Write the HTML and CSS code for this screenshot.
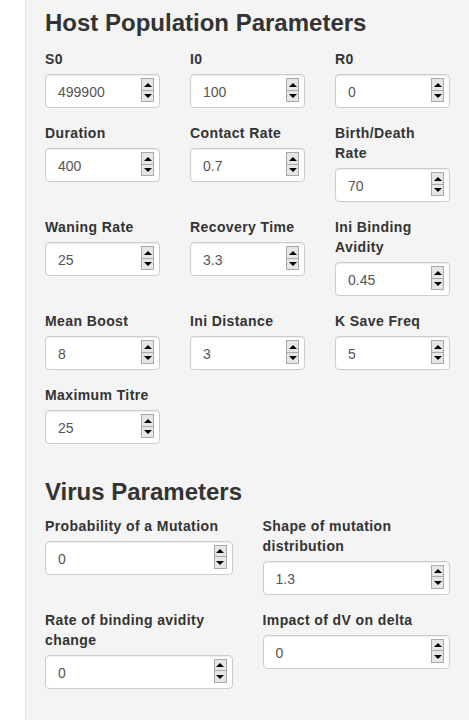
FILE: index.html
```html
<!DOCTYPE html>
<html>
<head>
<meta charset="utf-8">
<link rel="stylesheet" href="styles.css">
</head>
<body>
<div class="page">
  <div class="well">
    <h3 class="title first">Host Population Parameters</h3>
    <div class="grid three">
      <div class="group"><label>S0</label><div class="num"><input value="499900"><span class="spin"><i class="up"></i><i class="down"></i></span></div></div>
      <div class="group"><label>I0</label><div class="num"><input value="100"><span class="spin"><i class="up"></i><i class="down"></i></span></div></div>
      <div class="group"><label>R0</label><div class="num"><input value="0"><span class="spin"><i class="up"></i><i class="down"></i></span></div></div>

      <div class="group"><label>Duration</label><div class="num"><input value="400"><span class="spin"><i class="up"></i><i class="down"></i></span></div></div>
      <div class="group"><label>Contact Rate</label><div class="num"><input value="0.7"><span class="spin"><i class="up"></i><i class="down"></i></span></div></div>
      <div class="group"><label>Birth/Death Rate</label><div class="num"><input value="70"><span class="spin"><i class="up"></i><i class="down"></i></span></div></div>

      <div class="group"><label>Waning Rate</label><div class="num"><input value="25"><span class="spin"><i class="up"></i><i class="down"></i></span></div></div>
      <div class="group"><label>Recovery Time</label><div class="num"><input value="3.3"><span class="spin"><i class="up"></i><i class="down"></i></span></div></div>
      <div class="group"><label>Ini Binding Avidity</label><div class="num"><input value="0.45"><span class="spin"><i class="up"></i><i class="down"></i></span></div></div>

      <div class="group"><label>Mean Boost</label><div class="num"><input value="8"><span class="spin"><i class="up"></i><i class="down"></i></span></div></div>
      <div class="group"><label>Ini Distance</label><div class="num"><input value="3"><span class="spin"><i class="up"></i><i class="down"></i></span></div></div>
      <div class="group"><label>K Save Freq</label><div class="num"><input value="5"><span class="spin"><i class="up"></i><i class="down"></i></span></div></div>

      <div class="group"><label>Maximum Titre</label><div class="num"><input value="25"><span class="spin"><i class="up"></i><i class="down"></i></span></div></div>
    </div>

    <h3 class="title">Virus Parameters</h3>
    <div class="grid two">
      <div class="group"><label>Probability of a Mutation</label><div class="num"><input value="0"><span class="spin"><i class="up"></i><i class="down"></i></span></div></div>
      <div class="group"><label>Shape of mutation distribution</label><div class="num"><input value="1.3"><span class="spin"><i class="up"></i><i class="down"></i></span></div></div>
      <div class="group"><label>Rate of binding avidity change</label><div class="num"><input value="0"><span class="spin"><i class="up"></i><i class="down"></i></span></div></div>
      <div class="group"><label>Impact of dV on delta</label><div class="num"><input value="0"><span class="spin"><i class="up"></i><i class="down"></i></span></div></div>
    </div>
  </div>
</div>
</body>
</html>
```
FILE: styles.css
```css
html, body {
  margin: 0;
  padding: 0;
  overflow: hidden;
  background: #fff;
}
body {
  font-family: "Liberation Sans", Arial, sans-serif;
  font-size: 14px;
  line-height: 20px;
  color: #333;
}
.page {
  padding-left: 25px;
}
.well {
  min-height: 730px;
  background: #f4f4f4;
  border-left: 1px solid #e3e3e3;
  padding: 10px 0 0 19px;
}
.title {
  font-size: 24px;
  font-weight: 700;
  line-height: 26.4px;
  margin: 20px 0 10px;
  color: #333;
}
.title.first {
  margin-top: 0;
  margin-bottom: 13px;
}
.grid {
  display: grid;
  column-gap: 30px;
  align-items: start;
}
.grid.three { grid-template-columns: repeat(3, 115px); }
.grid.two { grid-template-columns: repeat(2, 187.5px); }
.group {
  margin-bottom: 15px;
}
.group label {
  display: block;
  font-weight: 700;
  letter-spacing: 0.4px;
  margin-bottom: 5px;
}
.num {
  box-sizing: border-box;
  height: 34px;
  display: flex;
  align-items: flex-start;
  background: #fff;
  border: 1px solid #ccc;
  border-radius: 4px;
  box-shadow: inset 0 1px 1px rgba(0,0,0,.075);
  padding: 3px 5px 0 12px;
}
.num input {
  flex: 1;
  min-width: 0;
  height: 26px;
  margin-top: 1px;
  border: 0;
  padding: 0;
  background: transparent;
  font-family: "Liberation Sans", Arial, sans-serif;
  font-size: 14px;
  color: #555;
  outline: none;
}
.spin {
  box-sizing: border-box;
  width: 13px;
  height: 24px;
  display: flex;
  flex-direction: column;
  border: 1px solid #a9a9a9;
  background: #e6e6e6;
}
.spin i {
  flex: 1;
  display: flex;
  align-items: center;
  justify-content: center;
}
.spin i.up { border-bottom: 1px solid #a9a9a9; }
.spin i::before {
  content: "";
  width: 0;
  height: 0;
  border-left: 4px solid transparent;
  border-right: 4px solid transparent;
}
.spin i.up::before { border-bottom: 4px solid #000; }
.spin i.down::before { border-top: 4px solid #000; }
```
